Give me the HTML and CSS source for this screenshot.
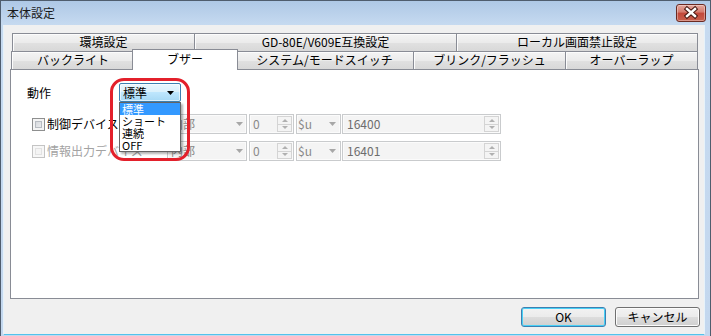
FILE: index.html
```html
<!DOCTYPE html>
<html lang="ja">
<head>
<meta charset="UTF-8">
<title>本体設定</title>
<link rel="stylesheet" href="styles.css">
</head>
<body>

<div class="window">
    <div class="titlebar">
        <span class="title">本体設定</span>
        <div class="close-btn">
            <svg width="30" height="18" viewBox="0 0 30 18">
                <path d="M11 5 L19 12 M19 5 L11 12" stroke="#4a1a14" stroke-width="4.5" stroke-linecap="square" fill="none"/>
                <path d="M11 5 L19 12 M19 5 L11 12" stroke="#ffffff" stroke-width="2.4" stroke-linecap="square" fill="none"/>
            </svg>
        </div>
    </div>

    <div class="client">
        <!-- タブ (2段) -->
        <div class="tab-row back">
            <div class="tab t-kankyo">環境設定</div>
            <div class="tab t-gd">GD-80E/V609E互換設定</div>
            <div class="tab t-local">ローカル画面禁止設定</div>
        </div>
        <div class="tab-row front">
            <div class="tab t-back">バックライト</div>
            <div class="tab t-buzzer selected">ブザー</div>
            <div class="tab t-system">システム/モードスイッチ</div>
            <div class="tab t-blink">ブリンク/フラッシュ</div>
            <div class="tab t-over">オーバーラップ</div>
        </div>

        <div class="panel">
            <div class="action-row">
                <span class="action-label">動作</span>
                <div class="combo open">
                    <span class="combo-text">標準</span>
                    <svg class="arrow" width="7" height="4" viewBox="0 0 7 4"><path d="M0 0H7L3.5 4Z" fill="#000"/></svg>
                    <ul class="droplist">
                        <li class="hl">標準</li>
                        <li>ショート</li>
                        <li>連続</li>
                        <li>OFF</li>
                    </ul>
                    <div class="mark"></div>
                </div>
            </div>

            <div class="ctl-row">
                <div class="check-cell">
                    <span class="checkbox"></span>
                    <span>制御デバイス</span>
                </div>
                <div class="field combo-dis w-dev">
                    <span>内部</span>
                    <svg width="7" height="4" viewBox="0 0 7 4"><path d="M0 0H7L3.5 4Z" fill="#a7a7a7"/></svg>
                </div>
                <div class="field spin w-num">
                    <span>0</span>
                    <div class="spin-btns"><i class="up"></i><i class="down"></i></div>
                </div>
                <div class="field combo-dis w-unit">
                    <span>$u</span>
                    <svg width="7" height="4" viewBox="0 0 7 4"><path d="M0 0H7L3.5 4Z" fill="#a7a7a7"/></svg>
                </div>
                <div class="field spin w-addr">
                    <span class="dark">16400</span>
                    <div class="spin-btns"><i class="up"></i><i class="down"></i></div>
                </div>
            </div>

            <div class="ctl-row second">
                <div class="check-cell disabled">
                    <span class="checkbox"></span>
                    <span>情報出力デバイス</span>
                </div>
                <div class="field combo-dis w-dev">
                    <span>内部</span>
                    <svg width="7" height="4" viewBox="0 0 7 4"><path d="M0 0H7L3.5 4Z" fill="#a7a7a7"/></svg>
                </div>
                <div class="field spin w-num">
                    <span>0</span>
                    <div class="spin-btns"><i class="up"></i><i class="down"></i></div>
                </div>
                <div class="field combo-dis w-unit">
                    <span>$u</span>
                    <svg width="7" height="4" viewBox="0 0 7 4"><path d="M0 0H7L3.5 4Z" fill="#a7a7a7"/></svg>
                </div>
                <div class="field spin w-addr">
                    <span class="dark">16401</span>
                    <div class="spin-btns"><i class="up"></i><i class="down"></i></div>
                </div>
            </div>
        </div>

        <div class="footer">
            <button class="btn default">OK</button>
            <button class="btn">キャンセル</button>
        </div>
    </div>
</div>

</body>
</html>
```

FILE: styles.css
```css
* {
    box-sizing: border-box;
}

body {
    margin: 0;
    font-family: "Noto Sans CJK JP", "Noto Sans", sans-serif;
    font-size: 12px;
    color: #000;
}

.window {
    width: 711px;
    height: 336px;
    display: flex;
    flex-direction: column;
    padding: 0 6px 2px 3px;
    border: 1px solid #4f5d6e;
    border-bottom: none;
    background: linear-gradient(#aec8e6 0, #c6daf0 24px, #c3d7ee 100%);
}

.titlebar {
    height: 24px;
    display: flex;
    align-items: flex-start;
}

.title {
    margin: 4px 0 0 3px;
    line-height: 16px;
    color: #1a1a1a;
}

.close-btn {
    margin: 3px -2px 0 auto;
    width: 30px;
    height: 18px;
    border: 1px solid #6b2a22;
    border-radius: 3px;
    background: linear-gradient(#e4a79d, #d47a6d 45%, #c2473a 50%, #c8604e);
    box-shadow: inset 0 0 0 1px rgba(255, 255, 255, 0.35);
    display: flex;
    align-items: center;
    justify-content: center;
    overflow: hidden;
}

.close-btn svg {
    flex: none;
}

.client {
    height: 309px;
    background: #f0f0f0;
    padding: 8px 5px 0 6px;
    box-shadow: -1px 0 0 #e6f2fa, 1px 0 0 #e6f2fa, 0 1px 0 #52c3ec;
}

/* タブ */
.tab-row {
    display: flex;
    height: 18px;
}

.tab-row.back {
    margin-left: 2px;
}

.tab-row.front {
    margin-left: 1px;
}

.tab {
    height: 18px;
    border: 1px solid #898c95;
    border-bottom: none;
    margin-left: -1px;
    background: linear-gradient(#f4f4f4, #ebebeb 50%, #e0e0e0 55%, #d8d8d8);
    box-shadow: inset 1px 1px 0 #fcfcfc;
    text-align: center;
    line-height: 16px;
    white-space: nowrap;
}

.tab:first-child {
    margin-left: 0;
}

.t-kankyo { width: 183px; }
.t-gd { width: 263px; }
.t-local { width: 242px; }
.t-back { width: 124px; }
.t-system { width: 179px; }
.t-blink { width: 153px; }
.t-over { width: 133px; }

.tab.selected {
    position: relative;
    z-index: 2;
    width: 106px;
    height: 21px;
    margin: -2px 0 -1px -3px;
    background: #fff;
    box-shadow: none;
    line-height: 17px;
}

.tab.selected + .tab {
    margin-left: -3px;
}

.panel {
    height: 230px;
    border: 1px solid #898c95;
    background: #fff;
    padding: 13px 0 0 16px;
}

/* 動作 */
.action-row {
    display: flex;
    align-items: center;
    height: 19px;
}

.action-label {
    width: 92px;
    line-height: 16px;
}

.combo {
    position: relative;
    width: 62px;
    height: 19px;
    display: flex;
    align-items: center;
    justify-content: space-between;
    padding: 0 6px 0 3px;
}

.combo.open {
    border: 1px solid #3c7fb1;
    border-radius: 2px;
    background: linear-gradient(#eaf6fd, #d9f0fc 50%, #bee6fd 50%, #a7d9f5);
    box-shadow: inset 0 0 0 1px rgba(255, 255, 255, 0.6);
}

.combo-text {
    line-height: 15px;
}

.droplist {
    position: absolute;
    left: -1px;
    top: 18px;
    z-index: 5;
    width: 62px;
    margin: 0;
    padding: 0;
    list-style: none;
    border: 1px solid #646464;
    background: #fff;
    box-shadow: 2px 2px 2px rgba(0, 0, 0, 0.3);
}

.droplist li {
    height: 12px;
    font-size: 11px;
    line-height: 12px;
    padding-left: 2px;
    white-space: nowrap;
}

.droplist li.hl {
    background: #3399ff;
    color: #fff;
}

/* 赤い注釈枠 */
.mark {
    position: absolute;
    left: -10px;
    top: -6px;
    width: 80px;
    height: 83px;
    border: 3px solid #e3202b;
    border-radius: 14px;
    z-index: 6;
    pointer-events: none;
}

/* デバイス行 */
.ctl-row {
    display: flex;
    align-items: center;
    height: 20px;
    margin: 12px 0 0 5px;
}

.ctl-row.second {
    margin-top: 7px;
}

.check-cell {
    width: 135px;
    display: flex;
    align-items: center;
    gap: 2px;
    white-space: nowrap;
    line-height: 16px;
}

.checkbox {
    width: 13px;
    height: 13px;
    border: 1px solid #8e8f8f;
    background: linear-gradient(135deg, #cbcfd5, #f6f6f6);
    box-shadow: inset 0 0 0 2px #f4f4f4, inset 0 0 0 3px #b8bcc2;
}

.check-cell.disabled {
    color: #a3a3a3;
}

.check-cell.disabled .checkbox {
    border-color: #c4c4c4;
    background: #f4f4f4;
    box-shadow: inset 0 0 0 2px #f7f7f7, inset 0 0 0 3px #e2e2e2;
}

.field {
    height: 20px;
    margin-right: 2px;
    border: 1px solid #c9cbcd;
    background: #f4f4f4;
    box-shadow: inset 0 0 0 1px #fbfbfb;
    display: flex;
    align-items: center;
    justify-content: space-between;
    color: #8a8a8a;
    line-height: 16px;
}

.w-dev { width: 80px; padding: 0 3px 0 3px; }
.w-num { width: 45px; padding: 0 1px 0 3px; }
.w-unit { width: 45px; padding: 0 4px 0 1px; margin-right: 1px; }
.w-addr { width: 159px; padding: 0 1px 0 4px; }

.field .dark {
    color: #6d6d6d;
}

.spin-btns {
    width: 15px;
    height: 16px;
    display: flex;
    flex-direction: column;
}

.spin-btns i {
    flex: 1;
    border: 1px solid #d4d4d4;
    background: #f4f4f4;
    display: flex;
    align-items: center;
    justify-content: center;
}

.spin-btns i + i {
    border-top: none;
}

.spin-btns i::after {
    content: "";
    border-left: 3px solid transparent;
    border-right: 3px solid transparent;
}

.spin-btns .up::after {
    border-bottom: 3px solid #b0b0b0;
}

.spin-btns .down::after {
    border-top: 3px solid #b0b0b0;
}

/* ボタン */
.footer {
    display: flex;
    justify-content: flex-end;
    gap: 9px;
    margin: 8px -1px 0 0;
}

.btn {
    width: 85px;
    height: 20px;
    padding: 0;
    font-family: inherit;
    font-size: 12px;
    line-height: 16px;
    color: #000;
    border: 1px solid #707070;
    border-radius: 3px;
    background: linear-gradient(#f2f2f2, #ebebeb 50%, #dddddd 50%, #cfcfcf);
    box-shadow: inset 0 0 0 1px #fcfcfc;
}

.btn.default {
    border-color: #3c7fb1;
    box-shadow: inset 0 0 0 1px #48d0f6;
}
```
